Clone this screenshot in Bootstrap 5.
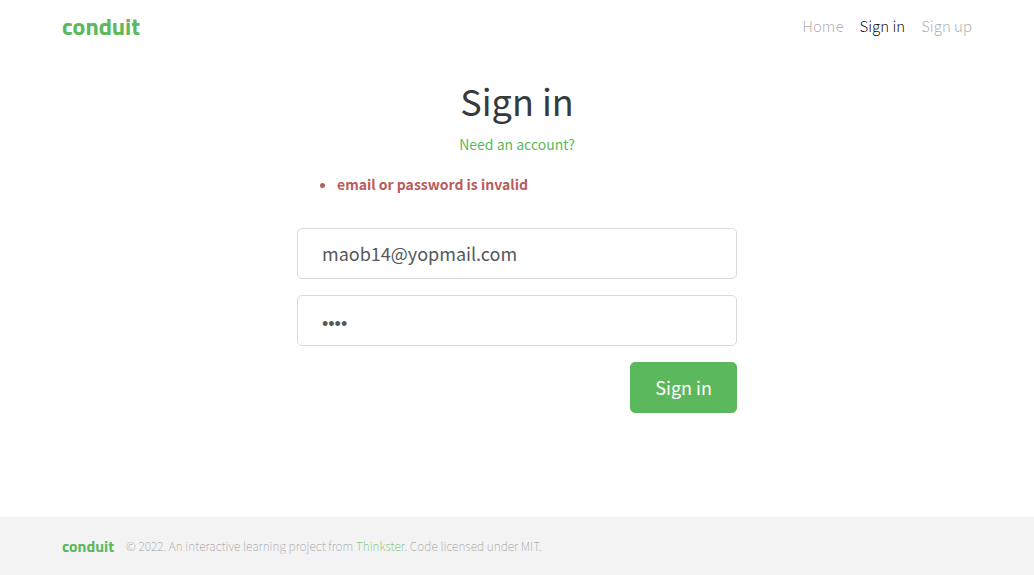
<!DOCTYPE html>
<html lang="en">
<head>
<meta charset="utf-8">
<meta name="viewport" content="width=device-width, initial-scale=1">
<title>Sign in — Conduit</title>
<link rel="stylesheet" href="https://cdn.jsdelivr.net/npm/bootstrap@5.3.0/dist/css/bootstrap.min.css">
<style>
  :root { --brand: #5cb85c; }
  body { font-family: "Noto Sans CJK SC", "Source Sans Pro", sans-serif; font-size: 14px; line-height: 24px; color: #373a3c; }
  a { color: var(--brand); text-decoration: none; }
  a:hover { color: #3d8b3d; }
  .page-width, .page-width > .row { --bs-gutter-x: 30px; }
  .page-width { max-width: 940px; }
  .conduit-logo { font-family: "Titillium Web", "Noto Sans CJK SC", sans-serif; font-weight: 700; color: var(--brand); }
  .navbar .conduit-logo { font-size: 24px; line-height: 36px; }
  .navbar .navbar-nav .nav-link { color: rgba(0, 0, 0, .35); font-size: 15px; line-height: 26px; font-weight: 300; padding: 0; }
  .navbar .navbar-nav .nav-link.active { color: rgba(0, 0, 0, .95); }
  .auth-title { font-size: 36px; line-height: 40px; font-weight: 400; }
  .error-messages { color: #b85c5c; font-weight: 700; padding-left: 40px; }
  .auth-page .form-control { height: 51px; padding: 11px 24px 13px; font-size: 18px; line-height: 25px; color: #55595c; border: 1px solid #d9d9d9; border-radius: 5px; }
  .auth-page .form-control[type="password"] { font-family: "Liberation Sans", Arial, sans-serif; padding: 16px 24px 8px; }
  .auth-page .btn { --bs-btn-bg: var(--brand); --bs-btn-border-color: var(--brand); --bs-btn-color: #fff; --bs-btn-hover-bg: #449d44; --bs-btn-hover-border-color: #449d44; --bs-btn-hover-color: #fff; height: 51px; padding: 0 24px; font-size: 18px; border-radius: 5px; }
  footer { background: #f3f3f3; line-height: 26px; }
  footer .conduit-logo { font-size: 16px; }
  .attribution { font-size: 12px; font-weight: 100; color: #999; }
</style>
</head>
<body class="d-flex flex-column min-vh-100">
<nav class="navbar navbar-expand p-0">
  <div class="container page-width py-2">
    <a class="navbar-brand conduit-logo m-0 p-0" href="#">conduit</a>
    <ul class="navbar-nav ms-auto gap-3">
      <li class="nav-item"><a class="nav-link" href="#">Home</a></li>
      <li class="nav-item"><a class="nav-link active" aria-current="page" href="#">Sign in</a></li>
      <li class="nav-item"><a class="nav-link" href="#">Sign up</a></li>
    </ul>
  </div>
</nav>
<main class="auth-page container page-width flex-grow-1 pt-4 pb-5">
  <div class="row">
    <div class="col-md-6 offset-md-3">
      <h1 class="auth-title text-center pt-1 pb-1 mb-2">Sign in</h1>
      <p class="text-center mb-3"><a href="#">Need an account?</a></p>
      <ul class="error-messages mb-3"><li>email or password is invalid</li></ul>
      <form class="d-flex flex-column gap-3 pt-3">
        <input class="form-control" type="email" aria-label="Email" placeholder="Email" value="maob14@yopmail.com">
        <input class="form-control" type="password" aria-label="Password" placeholder="Password" value="pass">
        <button class="btn align-self-end" type="button">Sign in</button>
      </form>
    </div>
  </div>
</main>
<footer class="py-3">
  <div class="container page-width d-flex align-items-center">
    <a class="conduit-logo" href="#">conduit</a>
    <span class="attribution ms-2 ps-1">© 2022. An interactive learning project from <a href="#">Thinkster</a>. Code licensed under MIT.</span>
  </div>
</footer>
<script src="https://cdn.jsdelivr.net/npm/bootstrap@5.3.0/dist/js/bootstrap.bundle.min.js"></script>
</body>
</html>
